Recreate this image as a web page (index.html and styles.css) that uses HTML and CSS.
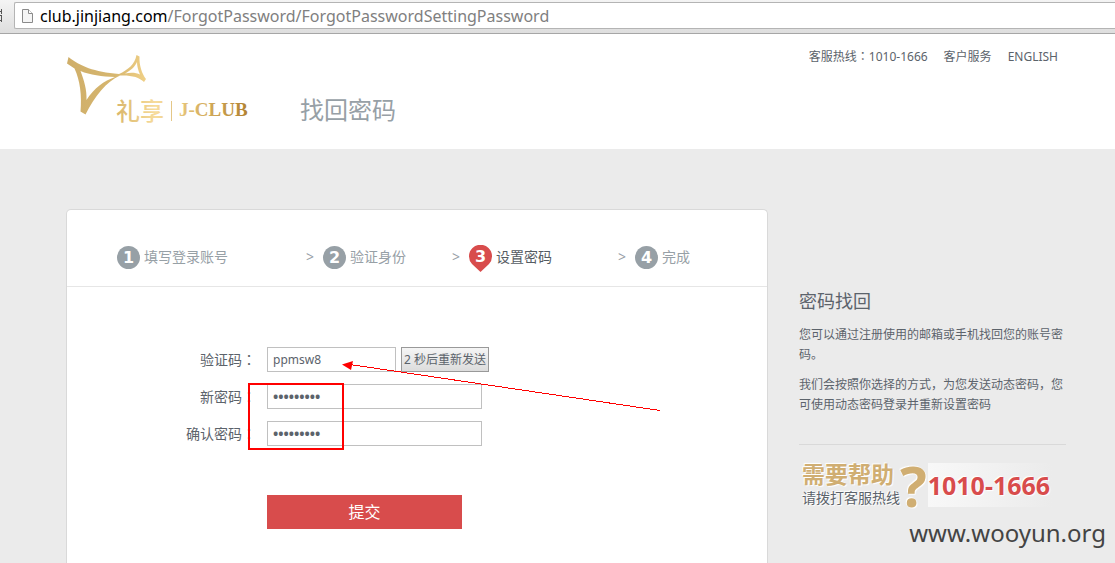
FILE: index.html
```html
<!DOCTYPE html>
<html lang="zh-CN">
<head>
<meta charset="utf-8">
<title>找回密码</title>
<link rel="stylesheet" href="styles.css">
</head>
<body>
<div class="toolbar">
  <svg class="toolbar-edge" width="14" height="33" viewBox="0 0 14 33" aria-hidden="true"><path d="M0 11.500h2M0 15.500h2M0 20.500h2M1.500 9v5M1.500 16v6" stroke="#555" fill="none"/></svg>
  <div class="address">
    <svg width="13" height="16" viewBox="0 0 13 16" aria-hidden="true"><path d="M1.500 1.500h6l4 4v9h-10z" fill="#f5f5f5" stroke="#8a8a8a"/><path d="M7.500 1.500v4h4" fill="#fff" stroke="#8a8a8a"/></svg>
    <span class="url"><b class="host">club.jinjiang.com</b>/ForgotPassword/ForgotPasswordSettingPassword</span>
  </div>
</div>

<header class="header">
  <a class="logo" href="#" aria-label="礼享 J-CLUB">
    <svg width="184" height="72" viewBox="66 54 184 72">
      <defs>
        <linearGradient id="gold" gradientUnits="userSpaceOnUse" x1="66" y1="0" x2="146" y2="0"><stop offset="0" stop-color="#cfae69"/><stop offset=".6" stop-color="#d6b66f"/><stop offset="1" stop-color="#f0d086"/></linearGradient>
        <linearGradient id="name" gradientUnits="userSpaceOnUse" x1="116" y1="0" x2="249" y2="0"><stop offset="0" stop-color="#d9b66b"/><stop offset=".3" stop-color="#f7dc9c"/><stop offset=".6" stop-color="#dcb768"/><stop offset="1" stop-color="#b1812f"/></linearGradient>
      </defs>
      <path fill="url(#gold)" fill-rule="evenodd" d="M68.500 57C80 66 94 72 119 74C128 70 135 64 136.500 55L139.500 56.500C139 65 142 74 146 79L144 82C139 77 131 75 120 75.500C106 82 95 96 85.500 114.500L80.500 111.500C82 96 80 80 74.500 68.500L67 63.500ZM80.500 71C84 80 87 90 86.500 100C94 88 104 81 115 77C102 76.500 90 75 80.500 71ZM125 73.500C131 72 136 72.500 140 74.500C138 70 137 66 137 62C135 67 130 71 125 73.500Z"/>
      <text class="logo-cn" x="116" y="120" fill="url(#name)">礼享</text>
      <path d="M171.500 101v20" stroke="#e4c787"/>
      <text class="logo-en" x="179" y="116" fill="url(#name)">J-CLUB</text>
    </svg>
  </a>
  <h1 class="title">找回密码</h1>
  <nav class="links">
    <span>客服热线<span class="mark" lang="zh-TW">：</span>1010-1666</span>
    <a href="#">客户服务</a>
    <a href="#">ENGLISH</a>
  </nav>
</header>

<main class="main">
  <section class="card">
    <ol class="steps">
      <li class="step"><span class="num">1</span>填写登录账号</li>
      <li class="step"><span class="sep">&gt;</span><span class="num">2</span>验证身份</li>
      <li class="step current"><span class="sep">&gt;</span><span class="pin"><svg width="23" height="27" viewBox="0 0 23 27" aria-hidden="true"><path d="M3 19A11.500 11.500 0 1 1 20 19L11.500 27Z" fill="#d84c4c"/></svg><span class="pin-num">3</span></span>设置密码</li>
      <li class="step"><span class="sep">&gt;</span><span class="num">4</span>完成</li>
    </ol>
    <form class="form">
      <div class="row"><label for="code">验证码<span class="mark" lang="zh-TW">：</span></label><input class="field short" id="code" type="text" value="ppmsw8"><button class="resend" type="button">2 秒后重新发送</button></div>
      <div class="row"><label for="pw">新密码<span class="mark" lang="zh-TW">：</span></label><input class="field secret" id="pw" type="password" value="abcdefghi"></div>
      <div class="row"><label for="pw2">确认密码<span class="mark" lang="zh-TW">：</span></label><input class="field secret" id="pw2" type="password" value="abcdefghi"></div>
      <button class="submit" type="submit">提交</button>
      <div class="highlight"></div>
      <svg class="arrow" width="320" height="52" viewBox="341 360 320 52" aria-hidden="true"><path d="M350 364.500L660 410.500" stroke="#f00" fill="none" shape-rendering="crispEdges"/><path d="M342 364.500L353 361L351 370Z" fill="#f00"/></svg>
    </form>
  </section>
  <aside class="side">
    <h2>密码找回</h2>
    <p>您可以通过注册使用的邮箱或手机找回您的账号密码。</p>
    <p>我们会按照你选择的方式，为您发送动态密码，您可使用动态密码登录并重新设置密码</p>
    <div class="help">
      <div class="help-text"><strong>需要帮助</strong><span>请拨打客服热线</span></div>
      <span class="question">?</span>
      <span class="phone">1010-1666</span>
    </div>
  </aside>
</main>
<div class="watermark">www.wooyun.org</div>
</body>
</html>
```

FILE: styles.css
```css
* { box-sizing: border-box; }
body {
  margin: 0;
  min-height: 100vh;
  display: flex;
  flex-direction: column;
  background: #ebebeb;
  color: #5c636b;
  font: 12px/20px "Noto Sans", "Noto Sans CJK SC", sans-serif;
}
h1, h2, p, ol { margin: 0; padding: 0; font-weight: 400; }
a { color: inherit; text-decoration: none; }
input, button { font: inherit; color: inherit; margin: 0; }
.mark { font-family: "Noto Sans CJK TC", sans-serif; line-height: 1; }

.toolbar {
  display: flex;
  height: 34px;
  background: linear-gradient(#f4f4f4, #dedede);
  border-bottom: 1px solid #a6a6a6;
}
.address {
  flex: 1;
  display: flex;
  align-items: center;
  gap: 6px;
  height: 27px;
  margin-top: 2px;
  padding-left: 6px;
  background: #fff;
  border: 1px solid #b4b4b4;
  border-right: 0;
  border-radius: 2px 0 0 2px;
}
.url { font-family: "Noto Sans", sans-serif; font-size: 16px; color: #808080; }
.host { font-weight: 400; color: #000; }

.header {
  display: flex;
  align-items: flex-start;
  height: 115px;
  padding: 20px 57px 0 66px;
  background: #fff;
}
.logo svg { display: block; }
.logo-cn { font: 500 24px "Noto Sans CJK SC", sans-serif; }
.logo-en { font: bold 19px "Liberation Serif", serif; }
.title {
  margin: 40px 0 0 50px;
  font-size: 24px;
  line-height: 32px;
  color: #97a0a6;
}
.links { display: flex; gap: 16px; margin: -7px 0 0 auto; }

.main {
  flex: 1;
  display: flex;
  gap: 31px;
  padding: 60px 49px 0 66px;
}
.card {
  flex: 1;
  background: #fff;
  border: 1px solid #d9d9d9;
  border-bottom: 0;
  border-radius: 5px 5px 0 0;
}
.steps {
  display: grid;
  grid-template-columns: 189fr 146fr 166fr 149fr;
  height: 77px;
  padding: 18px 0 0 50px;
  border-bottom: 1px solid #e6e6e6;
  list-style: none;
  font-size: 14px;
  color: #97a0a6;
}
.step { display: flex; align-items: center; }
.current { color: #555c63; }
.sep { width: 17px; color: #97a0a6; }
.num, .pin-num {
  width: 23px;
  line-height: 23px;
  color: #fff;
  text-align: center;
  font-family: "DejaVu Sans", sans-serif;
  font-weight: 700;
  font-size: 16px;
}
.num { margin-right: 4px; border-radius: 50%; background: #97a0a6; }
.pin { position: relative; height: 27px; margin: 2px 4px 0 0; }
.pin svg { display: block; }
.pin-num { position: absolute; left: 0; top: 0; }

.form {
  position: relative;
  display: flex;
  flex-direction: column;
  gap: 12px;
  padding-top: 60px;
}
.row { display: flex; align-items: center; height: 25px; }
.row label { width: 200px; padding-right: 11px; text-align: right; font-size: 14px; }
.field {
  width: 215px;
  height: 25px;
  padding: 0 5px;
  border: 1px solid #c0c0c0;
  background: #fff;
}
.short { width: 129px; }
.secret { font-size: 14px; font-weight: 700; }
.resend {
  width: 88px;
  height: 25px;
  margin-left: 5px;
  padding: 0;
  border: 1px solid #999;
  background: linear-gradient(#f5f5f5, #dcdcdc);
  white-space: nowrap;
}
.submit {
  width: 195px;
  height: 34px;
  margin: 37px 0 0 200px;
  padding: 0;
  border: 0;
  background: #d84c4c;
  color: #fff;
  font-size: 16px;
}
.highlight {
  position: absolute;
  left: 181px;
  top: 96px;
  width: 96px;
  height: 67px;
  border: 2px solid #f00;
}
.arrow { position: absolute; left: 274px; top: 73px; }

.side { width: 267px; padding-top: 80px; }
.side h2 { margin-bottom: 12px; font-size: 18px; line-height: 24px; }
.side p { margin-bottom: 10px; }
.help {
  display: flex;
  align-items: center;
  margin-top: 29px;
  padding: 16px 0 0 3px;
  border-top: 1px solid #d9d9d9;
  text-shadow: 1px 1px 1px #fff, -1px -1px 1px #fff;
}
.help-text { display: flex; flex-direction: column; }
.help-text strong { font-size: 23px; line-height: 26px; color: #d0ae72; }
.help-text span { font-size: 14px; line-height: 22px; }
.question {
  margin-right: 1px;
  color: #d0ae72;
  font: bold 56px/44px "Noto Sans", sans-serif;
}
.phone {
  flex: 1;
  line-height: 44px;
  background: linear-gradient(90deg, #f8f8f8, #ebebeb 90%);
  color: #d84c4c;
  font-size: 25px;
  font-weight: 700;
}
.watermark {
  position: absolute;
  right: 9px;
  bottom: 14px;
  font-size: 24px;
  line-height: 32px;
  color: #444;
}
```
